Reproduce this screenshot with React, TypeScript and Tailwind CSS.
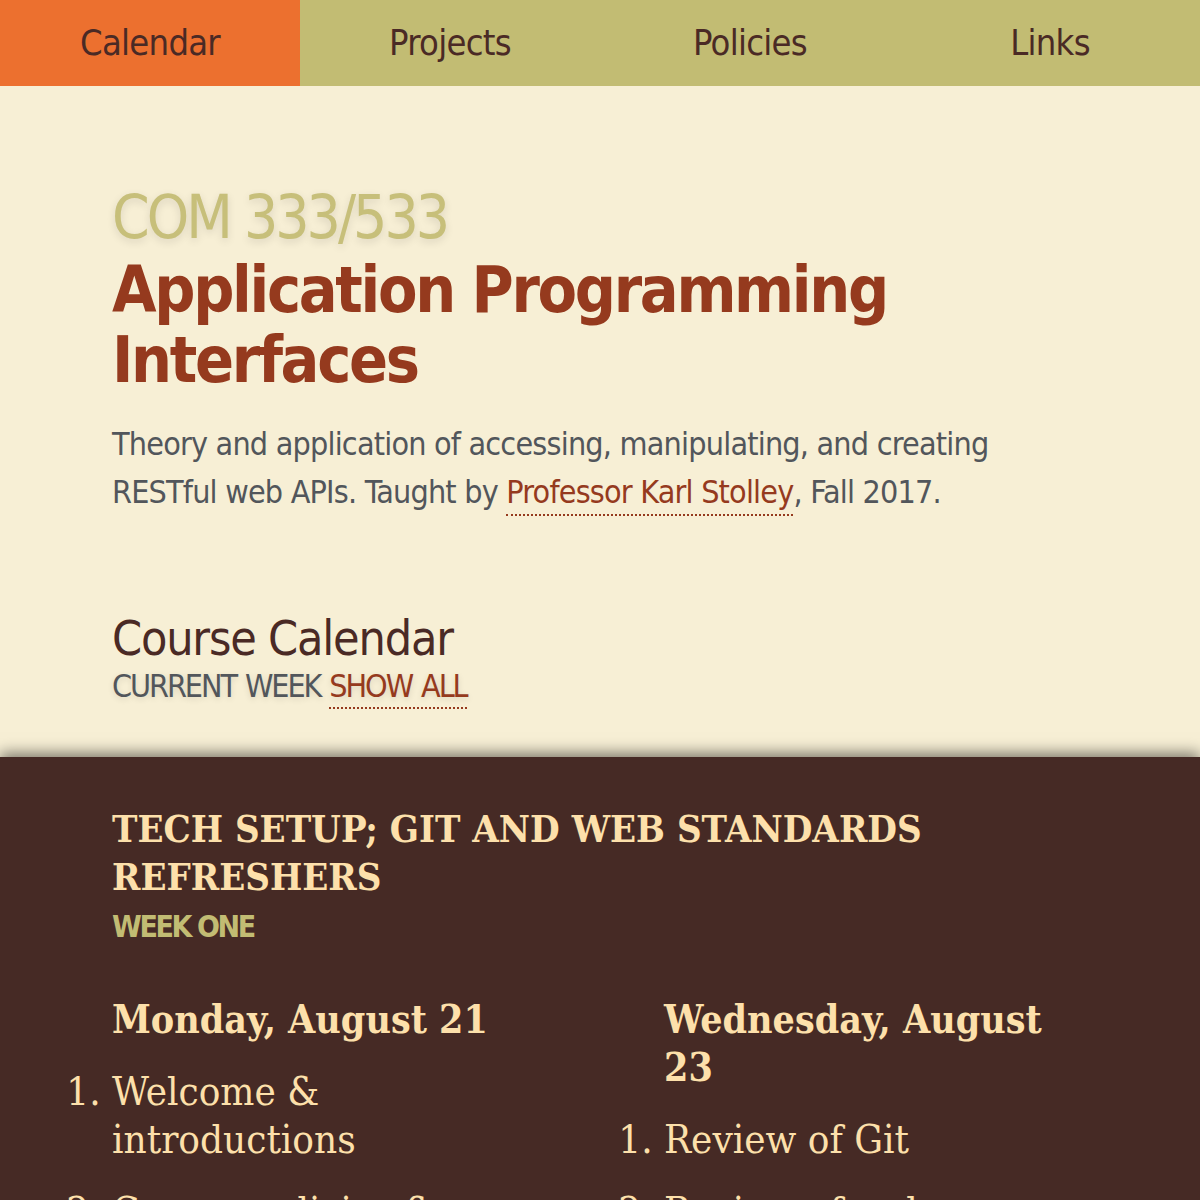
import React from 'react';

const sans = "font-['Liberation_Sans_Narrow','DejaVu_Sans_Condensed','Roboto_Condensed',sans-serif]";
const slab = "font-['DejaVu_Serif_Condensed','DejaVu_Serif',serif]";

const navItems = ['Calendar', 'Projects', 'Policies', 'Links'];

const App: React.FC = () => {
  return (
    <div className="min-h-screen bg-[#f7efd5]">
      {/* Top navigation */}
      <nav className={`grid grid-cols-4 h-[86px] ${sans}`}>
        {navItems.map((item, i) => (
          <a
            key={item}
            href="#"
            className={`flex items-center justify-center text-[36px] tracking-[-0.02em] text-[#4a2a25] ${i === 0 ? 'bg-[#ec702f]' : 'bg-[#c2bc73]'}`}
          >
            {item}
          </a>
        ))}
      </nav>

      {/* Course header */}
      <header className={`px-[112px] pt-[95px] pb-[52px] ${sans}`}>
        <p className="text-[60px] leading-[72px] tracking-[-0.05em] text-[#c7bf7a] [text-shadow:0_3px_8px_rgba(0,0,0,0.12)]">
          COM 333/533
        </p>
        <h1 className="mt-[2px] text-[64px] leading-[70px] tracking-[-0.036em] font-bold text-[#953a1e]">
          Application Programming Interfaces
        </h1>
        <p className="mt-[25px] text-[32px] leading-[48px] tracking-[-0.025em] text-[#52565b]">
          Theory and application of accessing, manipulating, and creating RESTful web APIs. Taught by{' '}
          <a href="#" className="pb-[3px] text-[#953a1e] border-b-2 border-dotted border-[#953a1e]">Professor Karl Stolley</a>, Fall 2017.
        </p>

        <h2 className="mt-[94px] text-[48px] leading-[56px] tracking-[-0.025em] text-[#4a2a25]">Course Calendar</h2>
        <p className="mt-[1px] text-[32px] leading-[38px] tracking-[-0.065em] [word-spacing:0.06em] text-[#52565b] [text-shadow:0_2px_6px_rgba(0,0,0,0.12)]">
          CURRENT WEEK{' '}
          <a href="#" className="pb-[2px] text-[#953a1e] border-b-2 border-dotted border-[#953a1e]">SHOW ALL</a>
        </p>
      </header>

      {/* Calendar week */}
      <section className="bg-[#462a25] shadow-[0_-4px_14px_rgba(0,0,0,0.5)] px-[112px] pt-[48px] pb-[60px]">
        <h3 className={`${slab} uppercase font-bold text-[38px] leading-[48px] text-[#fde0ab]`}>
          Tech Setup; Git and Web Standards Refreshers
        </h3>
        <p className={`${sans} mt-[8px] font-bold uppercase text-[30px] leading-[36px] tracking-[-0.08em] text-[#c2bc73]`}>
          Week One
        </p>

        <div className={`grid grid-cols-2 gap-x-[128px] mt-[50px] ${slab} text-[#fde0ab]`}>
          <div>
            <h4 className="font-bold text-[39px] leading-[48px]">Monday, August 21</h4>
            <ol className="list-decimal mt-[24px] text-[40px] leading-[48px] space-y-[24px]">
              <li>Welcome &amp; introductions</li>
              <li>Course policies &amp; projects</li>
            </ol>
          </div>
          <div>
            <h4 className="font-bold text-[39px] leading-[48px]">Wednesday, August 23</h4>
            <ol className="list-decimal mt-[24px] text-[40px] leading-[48px] space-y-[24px]">
              <li>Review of Git</li>
              <li>Review of web standards</li>
            </ol>
          </div>
        </div>
      </section>
    </div>
  );
};

export default App;
